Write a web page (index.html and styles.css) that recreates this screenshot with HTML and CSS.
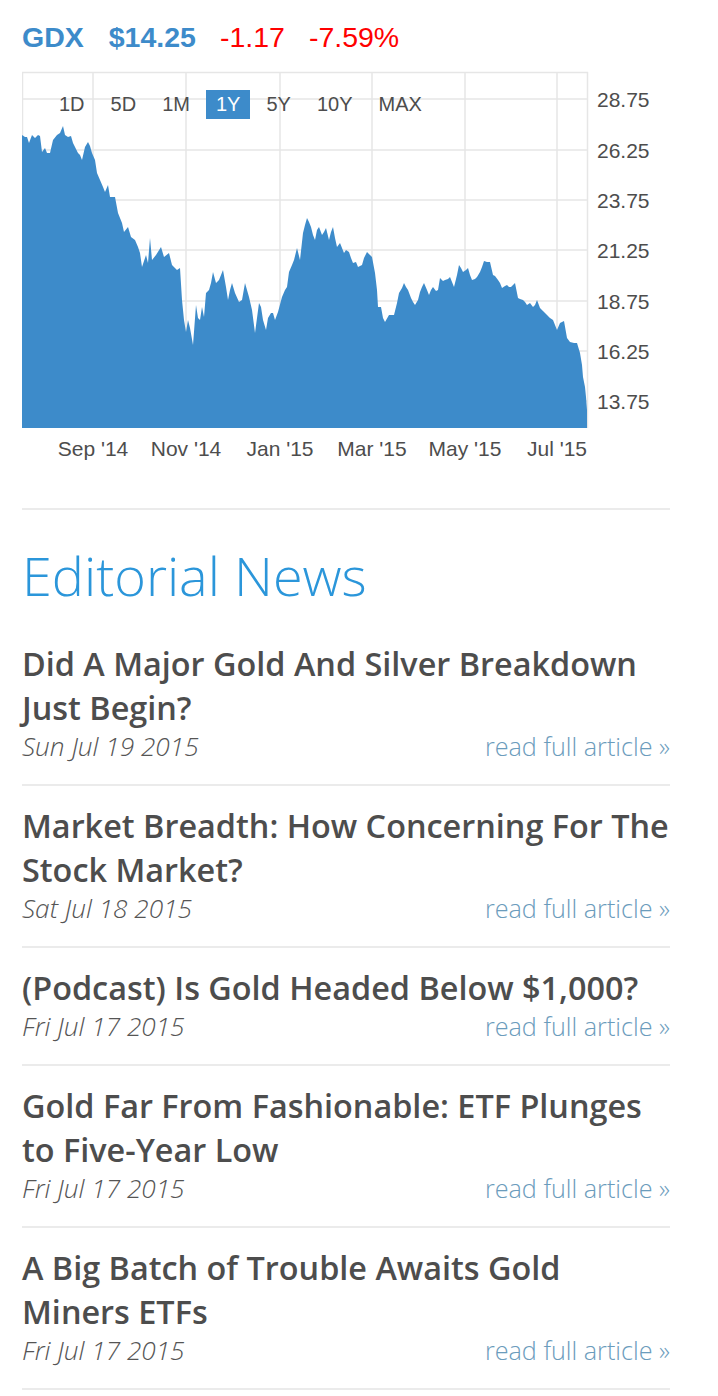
FILE: index.html
```html
<!DOCTYPE html>
<html lang="en">
<head>
  <meta charset="UTF-8" />
  <meta name="viewport" content="width=device-width, initial-scale=1.0" />
  <title>GDX - Editorial News</title>
  <link rel="stylesheet" href="styles.css">
</head>
<body>
  <div class="page">
    <div class="quote">
      <span class="symbol">GDX</span>
      <span class="price">$14.25</span>
      <span class="change">-1.17</span>
      <span class="change">-7.59%</span>
    </div>

    <div class="chart">
      <svg class="chart-svg" width="660" height="409" viewBox="22 71 660 409">
        <!-- grid -->
        <g class="grid">
          <line x1="22" y1="72.5" x2="588" y2="72.5" />
          <line x1="22" y1="99" x2="588" y2="99" />
          <line x1="22" y1="150" x2="588" y2="150" />
          <line x1="22" y1="200" x2="588" y2="200" />
          <line x1="22" y1="250" x2="588" y2="250" />
          <line x1="22" y1="301" x2="588" y2="301" />
          <line x1="22" y1="351" x2="588" y2="351" />
          <line x1="22" y1="401" x2="588" y2="401" />
          <line x1="22.5" y1="72" x2="22.5" y2="428" />
          <line x1="93" y1="72" x2="93" y2="428" />
          <line x1="186" y1="72" x2="186" y2="428" />
          <line x1="280" y1="72" x2="280" y2="428" />
          <line x1="372" y1="72" x2="372" y2="428" />
          <line x1="465" y1="72" x2="465" y2="428" />
          <line x1="557" y1="72" x2="557" y2="428" />
          <line x1="587.5" y1="72" x2="587.5" y2="428" />
        </g>

        <path class="area" d="M22,428 L22,135 25,137 27,137 29,143 32,135 35,138 38,135 40,136 42,152 45,148 47,153 50,153 53,140 57,135 60,133 63,126 65,135 68,137 71,136 73,143 75,147 78,153 80,155 82,160 85,147 88,142 90,146 92,153 95,160 97,173 100,180 103,187 105,192 108,185 110,197 115,197 118,213 122,223 124,232 128,227 131,237 135,240 138,247 140,253 142,267 146,255 148,263 150,238 152,260 156,255 161,247 164,257 169,253 172,265 177,270 180,268 182,300 184,320 186,332 188,320 190,328 193,345 196,305 198,318 200,320 202,307 204,317 206,293 209,290 211,283 213,272 216,283 219,280 223,270 226,287 228,300 230,290 232,283 235,293 239,302 242,300 245,283 249,297 252,310 255,333 257,318 259,303 261,307 263,320 266,330 268,318 271,313 273,313 275,320 278,312 282,297 285,290 287,287 289,272 292,265 294,260 297,248 300,260 303,233 305,225 307,218 309,222 311,227 313,235 315,240 317,230 319,227 322,235 324,232 326,228 329,240 331,232 333,227 335,238 337,247 340,243 344,253 346,250 349,252 351,258 353,263 356,262 358,267 362,265 364,258 367,252 370,255 372,257 375,273 377,290 378,307 381,307 383,318 385,322 389,315 394,315 397,303 399,293 402,288 404,283 406,287 408,290 411,298 413,302 415,305 418,300 420,292 422,287 424,283 427,290 429,295 431,290 433,287 436,291 438,290 440,278 443,281 445,280 448,279 450,277 452,282 454,287 457,275 459,265 461,268 463,272 466,270 468,268 470,275 472,280 475,279 477,277 480,272 482,267 484,261 487,262 490,262 493,275 495,276 498,280 500,283 502,288 505,286 507,285 509,287 511,287 513,285 515,283 518,298 520,299 523,300 525,302 527,305 530,303 533,307 535,305 537,300 540,308 543,311 547,315 550,318 553,320 555,325 557,330 560,323 562,322 564,321 567,338 570,342 574,343 577,343 580,353 582,365 583,377 585,387 586,397 587,410 587,428 Z" />

        <g class="y-labels">
          <text x="597" y="106.5">28.75</text>
          <text x="597" y="157.5">26.25</text>
          <text x="597" y="207.5">23.75</text>
          <text x="597" y="257.5">21.25</text>
          <text x="597" y="308.5">18.75</text>
          <text x="597" y="358.5">16.25</text>
          <text x="597" y="408.5">13.75</text>
        </g>
        <g class="x-labels">
          <text x="93" y="456">Sep '14</text>
          <text x="186" y="456">Nov '14</text>
          <text x="280" y="456">Jan '15</text>
          <text x="372" y="456">Mar '15</text>
          <text x="465" y="456">May '15</text>
          <text x="557" y="456">Jul '15</text>
        </g>
      </svg>

      <div class="ranges">
        <span class="range">1D</span>
        <span class="range">5D</span>
        <span class="range">1M</span>
        <span class="range active">1Y</span>
        <span class="range">5Y</span>
        <span class="range">10Y</span>
        <span class="range">MAX</span>
      </div>
    </div>

    <div class="news">
      <h2>Editorial News</h2>

      <div class="article">
        <h3>Did A Major Gold And Silver Breakdown Just Begin?</h3>
        <div class="meta">
          <span class="date">Sun Jul 19 2015</span>
          <a href="#" class="more">read full article »</a>
        </div>
      </div>

      <div class="article">
        <h3>Market Breadth: How Concerning For The Stock Market?</h3>
        <div class="meta">
          <span class="date">Sat Jul 18 2015</span>
          <a href="#" class="more">read full article »</a>
        </div>
      </div>

      <div class="article">
        <h3>(Podcast) Is Gold Headed Below $1,000?</h3>
        <div class="meta">
          <span class="date">Fri Jul 17 2015</span>
          <a href="#" class="more">read full article »</a>
        </div>
      </div>

      <div class="article">
        <h3>Gold Far From Fashionable: ETF Plunges to Five-Year Low</h3>
        <div class="meta">
          <span class="date">Fri Jul 17 2015</span>
          <a href="#" class="more">read full article »</a>
        </div>
      </div>

      <div class="article">
        <h3>A Big Batch of Trouble Awaits Gold Miners ETFs</h3>
        <div class="meta">
          <span class="date">Fri Jul 17 2015</span>
          <a href="#" class="more">read full article »</a>
        </div>
      </div>
    </div>
  </div>
</body>
</html>
```

FILE: styles.css
```css
body { margin: 0; background: #fff; font-family: "Open Sans", sans-serif; }
.page { padding: 22px 48px 0 22px; }

.quote { display: flex; gap: 24px; font-family: "Liberation Sans", Arial, sans-serif; font-size: 28.5px; line-height: 30px; }
.symbol { margin-right: 1px; }
.symbol, .price { color: #3d8bca; font-weight: bold; }
.change { color: #ff0000; }

.chart { position: relative; margin-top: 19px; }
.chart-svg { display: block; }
.grid line { stroke: #e6e6e6; stroke-width: 1.5; }
.area { fill: #3d8bca; }
.y-labels text, .x-labels text { font-family: "Liberation Sans", Arial, sans-serif; font-size: 21px; fill: #4d4d4d; }
.x-labels text { text-anchor: middle; }

.ranges { position: absolute; top: 19px; left: 27px; display: flex; gap: 6px; }
.range { font-family: "Liberation Sans", Arial, sans-serif; font-size: 20px; line-height: 29px; padding: 0 10px; color: #4d4d4d; }
.range.active { background: #3d8bca; color: #fff; }

.news { margin-top: 28px; border-top: 2px solid #ebebeb; }
.news h2 { margin: 37px 0 20px; font-size: 54px; line-height: 57px; font-weight: 300; color: #2b96da; }

.article { padding: 17px 0 21px; border-bottom: 2px solid #ebebeb; }
.article h3 { margin: 0; font-size: 32.4px; line-height: 44px; font-weight: 600; color: #4d4d4d; }
.meta { display: flex; justify-content: space-between; font-size: 25px; line-height: 34px; }
.date { font-size: 26.2px; font-style: italic; font-weight: 300; color: #555; }
.more { font-size: 25.2px; font-weight: 300; color: #6b9cbc; text-decoration: none; }
```
